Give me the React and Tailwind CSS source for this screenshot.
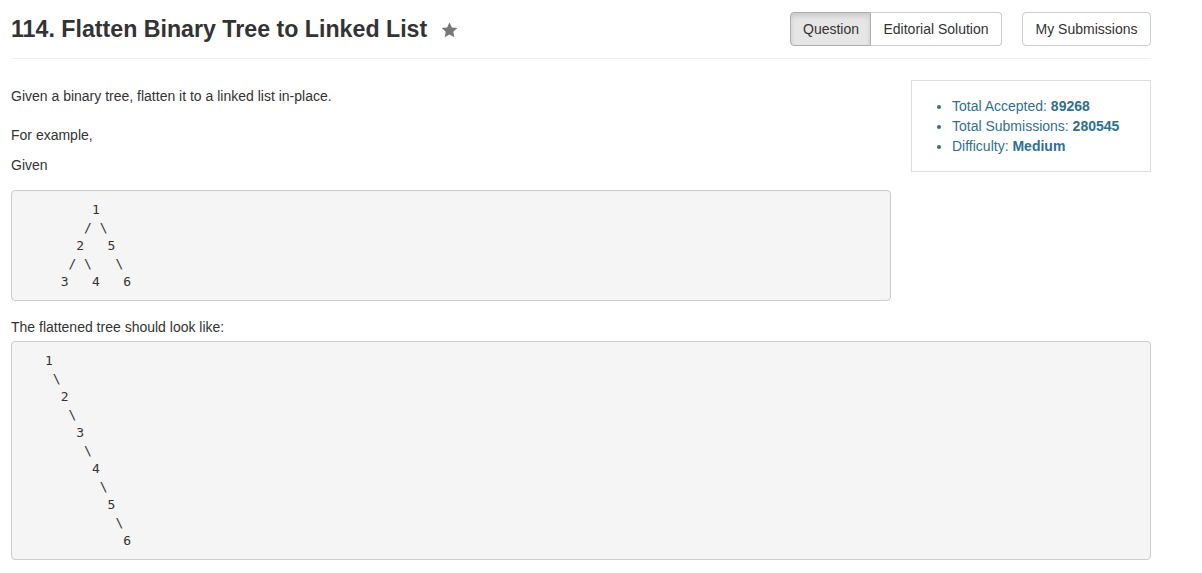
const tree = `         1
        / \\
       2   5
      / \\   \\
     3   4   6`;

const flat = `   1
    \\
     2
      \\
       3
        \\
         4
          \\
           5
            \\
             6`;

function Star() {
  return (
    <svg width="17" height="16" viewBox="0 0 24 23" className="ml-[14px] mt-[1px]">
      <path
        d="M12 0.5l3.4 7.3 7.9 0.9-5.9 5.4 1.6 7.8L12 17.9l-7 4 1.6-7.8L0.7 8.7l7.9-0.9z"
        fill="#777"
      />
    </svg>
  );
}

export default function App() {
  return (
    <div
      className="bg-white text-[#333] px-[11px] w-[1162px]"
      style={{ fontFamily: '"Liberation Sans", Arial, sans-serif' }}
    >
      {/* Header */}
      <div className="flex items-start pt-[12px]">
        <div className="flex items-center h-[34px] flex-1">
          <h1 className="text-[23.2px] font-bold text-[#333] leading-[30px]">
            114. Flatten Binary Tree to Linked List
          </h1>
          <Star />
        </div>
        <div className="flex">
          <button className="h-[34px] px-[12px] text-[14px] text-[#333] bg-[#e6e6e6] border border-[#adadad] rounded-l-[4px] shadow-[inset_0_3px_5px_rgba(0,0,0,0.125)] w-[81px]">
            Question
          </button>
          <button className="h-[34px] px-[12px] text-[14px] text-[#333] bg-white border border-[#ccc] border-l-0 rounded-r-[4px] w-[131px]">
            Editorial Solution
          </button>
        </div>
        <button className="h-[34px] ml-[20px] px-[12px] text-[14px] text-[#333] bg-white border border-[#ccc] rounded-[4px] w-[129px]">
          My Submissions
        </button>
      </div>
      <div className="mt-[12px] h-px bg-[#eee]" />

      {/* Body */}
      <div className="flex">
        <div className="flex-1 text-[14px] leading-[20px]">
          <p className="mt-[27px] mb-[19px]">Given a binary tree, flatten it to a linked list in-place.</p>
          <p className="mb-[10px]">For example,</p>
          <p className="mb-[15px]">Given</p>
          <pre
            className="bg-[#f5f5f5] border border-[#ccc] rounded-[4px] px-[9.5px] py-[9.5px] text-[13px] leading-[18px] text-[#333]"
            style={{ fontFamily: '"DejaVu Sans Mono", "Liberation Mono", monospace' }}
          >
            {tree}
          </pre>
        </div>
        <div className="w-[240px] ml-[20px] mt-[21px] self-start border border-[#ddd] py-[15px]">
          <ul className="list-disc pl-[40px] text-[14px] leading-[20px] text-[#31708f]">
            <li>
              Total Accepted: <b>89268</b>
            </li>
            <li>
              Total Submissions: <b>280545</b>
            </li>
            <li>
              Difficulty: <b>Medium</b>
            </li>
          </ul>
        </div>
      </div>

      <p className="mt-[16px] mb-[4px] text-[14px] leading-[20px]">The flattened tree should look like:</p>
      <pre
        className="bg-[#f5f5f5] border border-[#ccc] rounded-[4px] px-[9.5px] py-[9.5px] text-[13px] leading-[18px] text-[#333]"
        style={{ fontFamily: '"DejaVu Sans Mono", "Liberation Mono", monospace' }}
      >
        {flat}
      </pre>
    </div>
  );
}
